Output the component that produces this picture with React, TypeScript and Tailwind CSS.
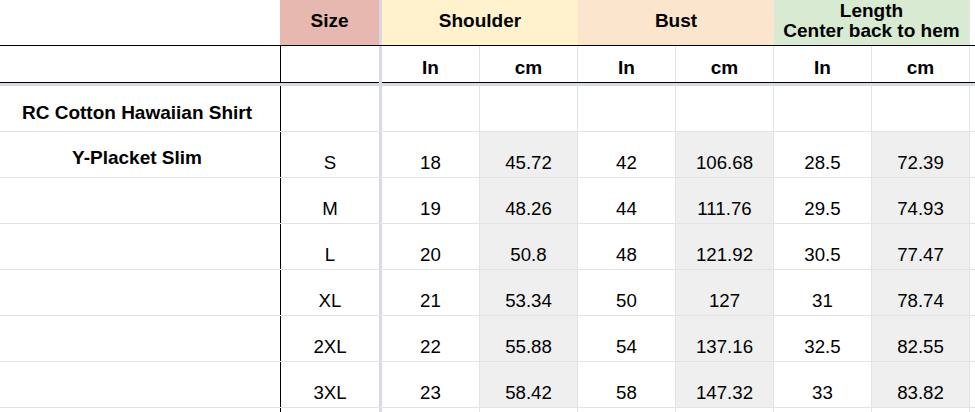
import React from "react";

const rows = [
  ["S", "18", "45.72", "42", "106.68", "28.5", "72.39"],
  ["M", "19", "48.26", "44", "111.76", "29.5", "74.93"],
  ["L", "20", "50.8", "48", "121.92", "30.5", "77.47"],
  ["XL", "21", "53.34", "50", "127", "31", "78.74"],
  ["2XL", "22", "55.88", "54", "137.16", "32.5", "82.55"],
  ["3XL", "23", "58.42", "58", "147.32", "33", "83.82"],
];

function Freeze() {
  return <div className="w-[3px] shrink-0 self-stretch bg-[#d5dae4]" />;
}

function BlackV() {
  return <div className="w-px shrink-0 self-stretch bg-black" />;
}

export default function App() {
  const sub = ["In", "cm", "In", "cm", "In", "cm"];
  return (
    <div className="w-[975px] h-[412px] overflow-hidden bg-white text-black font-['Liberation_Sans',Arial,sans-serif]">
      {/* header row 1 */}
      <div className="flex h-[45px]">
        <div className="w-[280px] shrink-0" />
        <div className="w-[99px] shrink-0 bg-[#e6b8af] flex items-center justify-center pb-[3px] text-[19px] font-bold">
          Size
        </div>
        <Freeze />
        <div className="w-[196px] shrink-0 bg-[#fff2cc] flex items-center justify-center pb-[3px] text-[19px] font-bold">
          Shoulder
        </div>
        <div className="w-[196px] shrink-0 bg-[#fce5cd] flex items-center justify-center pb-[3px] text-[19px] font-bold">
          Bust
        </div>
        <div className="w-[196px] shrink-0 bg-[#d9ead3] border-r border-[#e2e3e3] flex flex-col items-center justify-center pb-[4px] text-[19px] font-bold leading-[20px] text-center">
          <span>Length</span>
          <span>Center back to hem</span>
        </div>
        <div className="flex-1" />
      </div>
      <div className="h-px bg-black" />
      {/* header row 2 */}
      <div className="flex h-[36px]">
        <div className="w-[280px] shrink-0" />
        <BlackV />
        <div className="w-[98px] shrink-0" />
        <Freeze />
        {sub.map((s, i) => (
          <div
            key={i}
            className="w-[98px] shrink-0 border-r border-[#e2e3e3] flex items-end justify-center text-[19px] font-bold leading-normal"
          >
            {s}
          </div>
        ))}
        <div className="flex-1" />
      </div>
      <div className="flex h-px">
        <div className="w-[379px] bg-black" />
        <Freeze />
        <div className="flex-1 bg-black" />
      </div>
      <div className="h-[3px] bg-[#d5dae4]" />
      {/* title row */}
      <div className="flex h-[46px] border-b border-[#e2e3e3]">
        <div className="w-[280px] shrink-0 flex items-start justify-center pt-[13px] pr-[6px] text-[19px] font-bold leading-normal">
          RC Cotton Hawaiian Shirt
        </div>
        <BlackV />
        <div className="w-[98px] shrink-0" />
        <Freeze />
        {sub.map((_, i) => (
          <div key={i} className="w-[98px] shrink-0 border-r border-[#e2e3e3]" />
        ))}
        <div className="flex-1" />
      </div>
      {rows.map((r, ri) => (
        <div key={ri} className="flex h-[46px] border-b border-[#e2e3e3]">
          <div className="w-[280px] shrink-0 flex items-start justify-center pt-[12px] pr-[6px] text-[19px] font-bold leading-normal">
            {ri === 0 ? "Y-Placket Slim" : ""}
          </div>
          <BlackV />
          <div className="w-[98px] shrink-0 flex items-end justify-center text-[18.67px] leading-normal">
            {r[0]}
          </div>
          <Freeze />
          {r.slice(1).map((v, i) => (
            <div
              key={i}
              className={`w-[98px] shrink-0 border-r border-[#e2e3e3] flex items-end justify-center text-[18.67px] leading-normal ${
                i % 2 === 1 ? "bg-[#efefef]" : ""
              }`}
            >
              {v}
            </div>
          ))}
          <div className="flex-1" />
        </div>
      ))}
      <div className="flex h-[46px]">
        <div className="w-[280px] shrink-0" />
        <BlackV />
        <div className="w-[98px] shrink-0" />
        <Freeze />
        {sub.map((_, i) => (
          <div key={i} className="w-[98px] shrink-0 border-r border-[#e2e3e3]" />
        ))}
        <div className="flex-1" />
      </div>
    </div>
  );
}
